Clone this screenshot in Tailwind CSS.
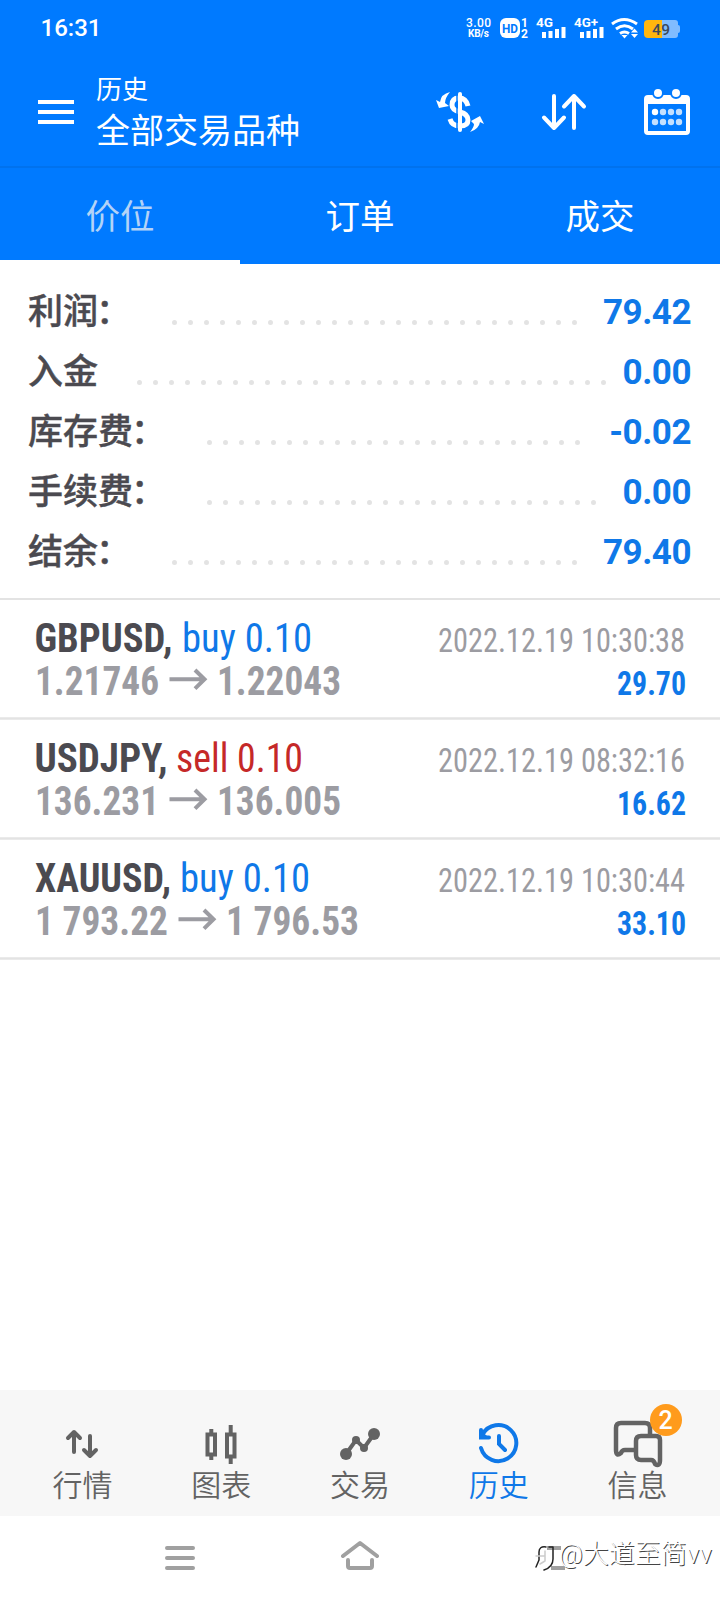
<!DOCTYPE html>
<html lang="zh-CN">
<head>
<meta charset="utf-8">
<title>历史</title>
<script src="https://cdn.jsdelivr.net/npm/@tailwindcss/browser@4"></script>
</head>
<body class="w-[720px] h-[1600px] overflow-hidden bg-white font-[Roboto,'Noto_Sans_CJK_SC',sans-serif] flex flex-col">
<header class="bg-[#007aff] text-white shrink-0">
  <div class="h-14 pl-10 pr-10 flex items-center justify-between">
    <svg class="w-[62px] h-14 fill-current" ><text x="0.500" y="36" font-size="24" font-weight="500" textLength="61">16:31</text></svg>
    <svg class="w-[220px] h-14 fill-current" viewBox="460 0 220 56">
      <g font-weight="700">
        <text x="466" y="27" font-size="12" font-weight="500" textLength="25">3.00</text>
        <text x="468" y="37" font-size="10" textLength="21">KB/s</text>
        <rect x="500" y="18" width="20" height="20" rx="6"/>
        <text x="502" y="33" font-size="13" textLength="16" lengthAdjust="spacingAndGlyphs" fill="#007aff">HD</text>
        <text x="521" y="27" font-size="12">1</text>
        <text x="521" y="38" font-size="12">2</text>
        <text x="536" y="27" font-size="13" textLength="17" lengthAdjust="spacingAndGlyphs">4G</text>
        <text x="574" y="27" font-size="13" textLength="24" lengthAdjust="spacingAndGlyphs">4G+</text>
      </g>
      <path d="M542 32h4v6h-4zM548.500 31h4v7h-4zM555 29h4v9h-4zM561.500 27h4v11h-4zM580 32h4v6h-4zM586.500 31h4v7h-4zM593 29h4v9h-4zM599.500 27h4v11h-4z"/>
      <g fill="none" stroke="currentColor" stroke-width="3"><path d="M612 24q12-9 25 0M616 29q8.500-6.500 17 0M620 33.500q4.500-3 9 0"/></g>
      <path d="M621.500 35h6l-3 3.500zM631 32.500l3.500-4 3.500 4zM631 34h7l-3.500 4z"/>
      <path d="M649 20h26q3 0 3 3v2q2 0 2 2v4q0 2-2 2v2q0 3-3 3H649z" fill="#80bcff"/>
      <path d="M662 20h-14q-4 0-4 4v10q0 4 4 4h14z" fill="#ffb60d"/>
      <text x="652" y="35" font-size="15.500" font-weight="500" fill="#3c4a5c" textLength="18">49</text>
    </svg>
  </div>
  <div class="h-[112px] border-b-2 border-[#0072ee] pl-[38px] pr-[28px] pt-0.5 flex items-center">
    <svg class="w-9 h-6 fill-current" viewBox="0 0 36 24"><path d="M0 0h36v4H0zM0 10h36v4H0zM0 20h36v4H0z"/></svg>
    <div class="ml-[22px] mt-0.5">
      <div class="text-[26px] leading-[36px]">历史</div>
      <div class="text-[34px] leading-[47px]">全部交易品种</div>
    </div>
    <svg class="ml-auto w-[50px] h-[42px]" viewBox="435 91 50 42">
      <g fill="none" stroke="currentColor"><path d="M460 94v36" stroke-width="4" stroke-linecap="round"/><path d="M468 106Q466 98 459 98Q452 98 452 105Q452 110 460 112Q468 114 468 120Q468 126 460 126Q452 126 450 119" stroke-width="5"/><path d="M457 95v36" stroke="#007aff" stroke-width="1.500"/></g>
      <path fill="currentColor" d="M450 92Q441 94 440 102L436 100L439 108L449 106L445 103Q445 98 450 92zM470 132Q474 127 474 124L471 121L480 116L484 124L480 122Q479 129 470 132z"/>
    </svg>
    <svg class="ml-[56px] w-[46px] h-10" viewBox="541 92 46 40" fill="none" stroke="currentColor" stroke-width="4" stroke-linecap="round" stroke-linejoin="round"><path d="M554 96v32M544 117.500l10 10.500 10-10.500M574 128V96M564 106.500l10-10.500 10 10.500"/></svg>
    <svg class="ml-[57px] w-12 h-[50px]" viewBox="644 86 48 50"><rect x="646" y="96" width="42" height="36" rx="2" fill="none" stroke="currentColor" stroke-width="4"/><path fill="currentColor" d="M645 95h44v8h-44z"/><g fill="currentColor" stroke="#007aff" stroke-width="2"><circle cx="658" cy="92" r="5"/><circle cx="676" cy="92" r="5"/></g><g fill="#c4e0ff"><circle cx="655" cy="111" r="3.200" fill="#fff"/><circle cx="663" cy="111" r="3.200"/><circle cx="671" cy="111" r="3.200"/><circle cx="679" cy="111" r="3.200"/><circle cx="655" cy="121" r="3.200"/><circle cx="663" cy="121" r="3.200"/><circle cx="671" cy="121" r="3.200"/><circle cx="679" cy="121" r="3.200"/></g></svg>
  </div>
  <nav class="h-24 grid grid-cols-3 text-[34.500px] text-center leading-[99px]">
    <div class="text-[#b3d3f7] border-b-4 border-white h-24">价位</div><div class="h-24">订单</div><div class="h-24">成交</div>
  </nav>
</header>

<section class="h-[336px] shrink-0 border-b-2 border-[#e3e3e3] pt-[19px] pl-[28px] pr-[29px] text-[35px] font-medium text-[#4b4a50]">
  <div class="h-[60px] flex items-center"><div class="w-[144px] [-webkit-text-stroke:0.4px]">利润<span class="-ml-0.5">：</span></div><svg class="w-[420px] h-[5px] mt-[18px]"><path d="M2.500 2.500H403" stroke="#e3e3e3" stroke-width="5" stroke-linecap="round" stroke-dasharray="0 16"/></svg><div class="ml-auto font-bold tracking-[-0.5px] text-[#0f78e8]">79.42</div></div>
  <div class="h-[60px] flex items-center"><div class="w-[109px] [-webkit-text-stroke:0.4px]">入金</div><svg class="w-[470px] h-[5px] mt-[18px]"><path d="M2.500 2.500H467" stroke="#e3e3e3" stroke-width="5" stroke-linecap="round" stroke-dasharray="0 16"/></svg><div class="ml-auto font-bold tracking-[-0.5px] text-[#0f78e8]">0.00</div></div>
  <div class="h-[60px] flex items-center"><div class="w-[179px] [-webkit-text-stroke:0.4px]">库存费<span class="-ml-0.5">：</span></div><svg class="w-[375px] h-[5px] mt-[18px]"><path d="M2.500 2.500H371" stroke="#e3e3e3" stroke-width="5" stroke-linecap="round" stroke-dasharray="0 16"/></svg><div class="ml-auto font-bold tracking-[-0.5px] text-[#0f78e8]">-0.02</div></div>
  <div class="h-[60px] flex items-center"><div class="w-[179px] [-webkit-text-stroke:0.4px]">手续费<span class="-ml-0.5">：</span></div><svg class="w-[390px] h-[5px] mt-[18px]"><path d="M2.500 2.500H387" stroke="#e3e3e3" stroke-width="5" stroke-linecap="round" stroke-dasharray="0 16"/></svg><div class="ml-auto font-bold tracking-[-0.5px] text-[#0f78e8]">0.00</div></div>
  <div class="h-[60px] flex items-center"><div class="w-[144px] [-webkit-text-stroke:0.4px]">结余<span class="-ml-0.5">：</span></div><svg class="w-[420px] h-[5px] mt-[18px]"><path d="M2.500 2.500H403" stroke="#e3e3e3" stroke-width="5" stroke-linecap="round" stroke-dasharray="0 16"/></svg><div class="ml-auto font-bold tracking-[-0.5px] text-[#0f78e8]">79.40</div></div>
</section>

<main class="flex-1 font-stretch-condensed">
  <svg class="block w-[720px] h-[120px]">
    <text x="34.500" y="52" font-size="40" font-weight="700" fill="#4b4a50" textLength="138" lengthAdjust="spacingAndGlyphs">GBPUSD,</text>
    <text x="182" y="52" font-size="40" fill="#0f78e8" textLength="130" lengthAdjust="spacingAndGlyphs">buy 0.10</text>
    <g font-size="40" font-weight="700" fill="#9c9ca2"><text x="35" y="95" textLength="124" lengthAdjust="spacingAndGlyphs">1.21746</text><text x="217" y="95" textLength="124" lengthAdjust="spacingAndGlyphs">1.22043</text></g>
    <path d="M169.500 79.300h36M195 70l9.500 9.300-9.500 9.300" fill="none" stroke="#9c9ca2" stroke-width="4"/>
    <text x="438" y="52" font-size="33" fill="#9c9ca2" textLength="247" lengthAdjust="spacingAndGlyphs">2022.12.19 10:30:38</text>
    <text x="617" y="95" font-size="33" font-weight="700" fill="#0f78e8" textLength="69" lengthAdjust="spacingAndGlyphs">29.70</text>
    <path d="M0 118.500h720" stroke="#e3e3e3" stroke-width="2.500"/>
  </svg>
  <svg class="block w-[720px] h-[120px]">
    <text x="34.500" y="52" font-size="40" font-weight="700" fill="#4b4a50" textLength="133" lengthAdjust="spacingAndGlyphs">USDJPY,</text>
    <text x="176" y="52" font-size="40" fill="#c52828" textLength="127" lengthAdjust="spacingAndGlyphs">sell 0.10</text>
    <g font-size="40" font-weight="700" fill="#9c9ca2"><text x="35" y="95" textLength="124" lengthAdjust="spacingAndGlyphs">136.231</text><text x="217" y="95" textLength="124" lengthAdjust="spacingAndGlyphs">136.005</text></g>
    <path d="M169.500 79.300h36M195 70l9.500 9.300-9.500 9.300" fill="none" stroke="#9c9ca2" stroke-width="4"/>
    <text x="438" y="52" font-size="33" fill="#9c9ca2" textLength="247" lengthAdjust="spacingAndGlyphs">2022.12.19 08:32:16</text>
    <text x="617" y="95" font-size="33" font-weight="700" fill="#0f78e8" textLength="69" lengthAdjust="spacingAndGlyphs">16.62</text>
    <path d="M0 118.500h720" stroke="#e3e3e3" stroke-width="2.500"/>
  </svg>
  <svg class="block w-[720px] h-[120px]">
    <text x="35" y="52" font-size="40" font-weight="700" fill="#4b4a50" textLength="136" lengthAdjust="spacingAndGlyphs">XAUUSD,</text>
    <text x="180" y="52" font-size="40" fill="#0f78e8" textLength="130" lengthAdjust="spacingAndGlyphs">buy 0.10</text>
    <g font-size="40" font-weight="700" fill="#9c9ca2"><text x="35" y="95" textLength="133" lengthAdjust="spacingAndGlyphs">1 793.22</text><text x="226" y="95" textLength="133" lengthAdjust="spacingAndGlyphs">1 796.53</text></g>
    <path d="M178.500 79.300h36M204 70l9.500 9.300-9.500 9.300" fill="none" stroke="#9c9ca2" stroke-width="4"/>
    <text x="438" y="52" font-size="33" fill="#9c9ca2" textLength="247" lengthAdjust="spacingAndGlyphs">2022.12.19 10:30:44</text>
    <text x="617" y="95" font-size="33" font-weight="700" fill="#0f78e8" textLength="69" lengthAdjust="spacingAndGlyphs">33.10</text>
    <path d="M0 118.500h720" stroke="#e3e3e3" stroke-width="2.500"/>
  </svg>
</main>

<nav class="h-[126px] shrink-0 bg-[#f7f7f7] px-[13px] pt-7 grid grid-cols-5 justify-items-center text-[30px] leading-[44px] font-[350] text-[#636363]">
  <div class="flex flex-col items-center"><svg class="w-[60px] h-[46px]" viewBox="52 1418 60 46" fill="none" stroke="currentColor" stroke-width="4" stroke-linecap="round" stroke-linejoin="round"><path d="M74 1452v-20M68 1438l6-6 6 6M90 1436v20M84 1450l6 6 6-6"/></svg><span>行情</span></div>
  <div class="flex flex-col items-center"><svg class="w-[60px] h-[46px]" viewBox="191 1418 60 46" fill="none" stroke="currentColor" stroke-width="4"><path d="M207.500 1434.500h7.500v20h-7.500zM227 1434.500h7.500v22H227zM211.300 1429v5M211.300 1455v5M230.700 1425v9M230.700 1457v7"/></svg><span>图表</span></div>
  <div class="flex flex-col items-center"><svg class="w-[60px] h-[46px]" viewBox="330 1418 60 46" fill="none" stroke="currentColor" stroke-width="4"><path d="M346 1454l10-14 8 8 10-14"/><g fill="currentColor" stroke="none"><circle cx="346" cy="1454" r="6"/><circle cx="356" cy="1440" r="4"/><circle cx="364" cy="1448" r="4"/><circle cx="374" cy="1434" r="6"/></g></svg><span>交易</span></div>
  <div class="flex flex-col items-center text-[#0f78e8]"><svg class="w-[60px] h-[46px]" viewBox="469 1418 60 46" fill="none" stroke="currentColor" stroke-width="4" stroke-linecap="round"><path d="M481 1448a18 18 0 1 0 1.500-13.500M499 1436v8l6 6"/><path d="M481 1430v7.500h8" stroke-linejoin="miter"/><path d="M480 1430l10 8.500h-10z" fill="currentColor" stroke="none"/></svg><span>历史</span></div>
  <div class="flex flex-col items-center relative"><svg class="w-[60px] h-[50px] -mb-1" viewBox="608 1418 60 50" fill="none" stroke="currentColor" stroke-width="4.500" stroke-linejoin="round"><path d="M634 1450h-9q-3 0-4 3-5 4-5-3v-22q0-5 5-5h24q5 0 5 5v8"/><path d="M641 1436h15q4 0 4 4v20q0 7-5 4-1-4-4-4h-10q-5 0-5-5v-14q0-5 5-5z"/></svg><span>信息</span><div class="absolute -top-[14px] left-[42px] w-8 h-8 rounded-full bg-[#ff9b1c] text-white text-[25px] leading-[34px] font-medium text-center">2</div></div>
</nav>

<footer class="h-[84px] shrink-0 bg-white relative">
  <svg class="block w-[720px] h-[84px]" viewBox="0 1516 720 84" fill="none" stroke="#a0a0a0" stroke-width="4" stroke-linecap="round" stroke-linejoin="round">
    <path d="M167 1548h26M167 1558h26M167 1568h26M343 1556l17-13 17 13M348 1560v6q0 2 2 2h20q2 0 2-2v-6"/>
    <path d="M547 1548h14M551 1568h14" stroke-linecap="butt"/>
    <path d="M546 1547q-7-1-7 5v8l-3 7M549 1547h4v12q0 8-9 11" stroke="#222" stroke-width="1.500"/><path d="M536 1556h8M545 1551v10l-5 3" stroke="#ccc" stroke-width="1.500"/>
  </svg>
  <div class="absolute left-[559px] top-[20px] text-[26px] leading-[36px] font-light text-white whitespace-nowrap [text-shadow:1px_1px_0_#444]">@大道至简vv</div>
</footer>
</body>
</html>
